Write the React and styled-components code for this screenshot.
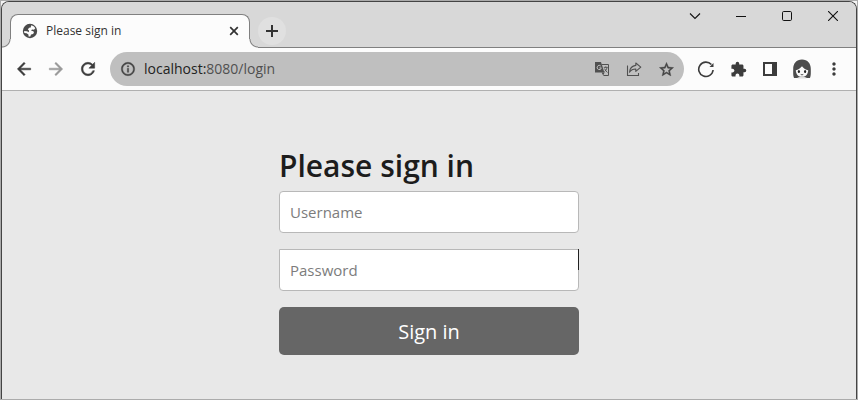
import React from 'react';
import styled, { createGlobalStyle } from 'styled-components';
import {
  MdArrowBack,
  MdArrowForward,
  MdExtension,
  MdInfoOutline,
  MdMoreVert,
  MdRefresh,
  MdStarBorder,
} from 'react-icons/md';

const App = () => {
  return (
    <>
      <GlobalStyle />
      <Frame>
        <BrowserWindow>
          <TabStrip />
          <Toolbar />
          <Login />
        </BrowserWindow>
      </Frame>
    </>
  );
};

const TabStrip = () => (
  <Strip>
    <Tab>
      <GlobeIcon />
      <TabTitle>Please sign in</TabTitle>
      <TabClose type="button" aria-label="Close tab">
        <svg width="10" height="10" viewBox="0 0 10 10">
          <path d="M1.2 1.2l7.6 7.6M8.8 1.2L1.2 8.8" stroke="currentColor" strokeWidth="1.7" />
        </svg>
      </TabClose>
    </Tab>
    <NewTab type="button" aria-label="New tab">
      <svg width="12" height="12" viewBox="0 0 12 12">
        <path d="M6 0v12M0 6h12" stroke="currentColor" strokeWidth="2" />
      </svg>
    </NewTab>
    <WindowControls>
      <WindowButton type="button" aria-label="Search tabs">
        <svg width="12" height="12" viewBox="0 0 12 12">
          <path d="M1 3.500l5 5 5-5" fill="none" stroke="currentColor" strokeWidth="1.1" />
        </svg>
      </WindowButton>
      <WindowButton type="button" aria-label="Minimize">
        <svg width="10" height="10" viewBox="0 0 10 10">
          <path d="M0 5.500h10" stroke="currentColor" />
        </svg>
      </WindowButton>
      <WindowButton type="button" aria-label="Maximize">
        <svg width="10" height="10" viewBox="0 0 10 10">
          <rect x="0.5" y="0.5" width="9" height="9" rx="1.2" fill="none" stroke="currentColor" />
        </svg>
      </WindowButton>
      <WindowButton type="button" aria-label="Close">
        <svg width="10" height="10" viewBox="0 0 10 10">
          <path d="M0 0l10 10M10 0L0 10" stroke="currentColor" strokeWidth="1.1" />
        </svg>
      </WindowButton>
    </WindowControls>
  </Strip>
);

const Toolbar = () => (
  <Bar>
    <IconGroup>
      <IconButton type="button" aria-label="Back" $bold><MdArrowBack size={20} /></IconButton>
      <IconButton type="button" aria-label="Forward" $color="#999" $bold><MdArrowForward size={20} /></IconButton>
      <IconButton type="button" aria-label="Reload" $bold><MdRefresh size={20} /></IconButton>
    </IconGroup>
    <AddressBar>
      <IconButton type="button" aria-label="Site information" $color="#444" $bold><MdInfoOutline size={16} /></IconButton>
      <Url>localhost:<span>8080/login</span></Url>
      <IconButton type="button" aria-label="Translate this page" $color="#505050"><TranslateIcon /></IconButton>
      <IconButton type="button" aria-label="Share this page" $color="#505050"><ShareIcon /></IconButton>
      <IconButton type="button" aria-label="Bookmark this tab" $color="#444" $bold><MdStarBorder size={17} /></IconButton>
    </AddressBar>
    <IconGroup>
      <IconButton type="button" aria-label="Sync">
        <svg width="18" height="18" viewBox="0 0 18 18">
          <path d="M16.100 10a7.200 7.200 0 1 1-1.700-5.400" fill="none" stroke="currentColor" strokeWidth="1.600" />
          <path d="M16.500 3v4h-4z" fill="currentColor" />
        </svg>
      </IconButton>
      <IconButton type="button" aria-label="Extensions"><MdExtension size={17} /></IconButton>
      <IconButton type="button" aria-label="Side panel">
        <svg width="14" height="14" viewBox="0 0 14 14">
          <path d="M0 0h14v14H0zM2 2v10h7V2z" fill="currentColor" fillRule="evenodd" />
        </svg>
      </IconButton>
      <IconButton type="button" aria-label="Profile"><Avatar /></IconButton>
      <IconButton type="button" aria-label="Menu"><MdMoreVert size={20} /></IconButton>
    </IconGroup>
  </Bar>
);

const GlobeIcon = () => (
  <svg width="18" height="18" viewBox="0 0 18 18">
    <circle cx="9" cy="9" r="7.200" fill="#4a4a4a" />
    <path d="M10.200 3.200c1.900.4 3.300 1.400 4.100 3l-1.300 1.600-2-.2-.9 1.100 2.300.5.600 1.800-1.600 1.200-1.400.4-.7 2-1.700-.2-.2-2-1.800-1.200-2.300-.2-.2-2 2.900.2 1.800 1 .2-1.700-1.200-1.100 1.300-1.600 1.600-.4z" fill="#fcfcfc" />
  </svg>
);

const TranslateIcon = () => (
  <svg width="14" height="14" viewBox="0 0 14 14" fill="none" stroke="currentColor">
    <path d="M6.500 2.500h7v11h-5" />
    <path d="M0 0h6l3.400 10.500H0z" fill="currentColor" stroke="none" />
    <path d="M6.600 10.500h2.900l-1.300 3z" fill="currentColor" stroke="none" />
    <path d="M5.800 4.100A2.100 2.100 0 1 0 6.300 5.900H4.400" stroke="#bfbfbf" />
    <path d="M8.800 5.400h4M10.800 4.400v1M12 5.600c-.4 1.900-1.400 3.200-2.600 4.200M9.600 6.600c.6 1.600 1.600 2.900 2.900 3.900" strokeWidth="0.9" />
  </svg>
);

const ShareIcon = () => (
  <svg width="16" height="16" viewBox="0 0 16 16" fill="none" stroke="currentColor" strokeWidth="1.1">
    <path d="M1.500 4.500v10h11v-2.500" />
    <path d="M9.800 2l5 4.200-5 4.200V8c-2.900 0-4.900 1-6.300 3.200.3-3.600 2.400-6.300 6.300-6.800z" strokeLinejoin="round" />
  </svg>
);

const Avatar = () => (
  <svg width="20" height="20" viewBox="0 0 20 20">
    <path d="M10 0.500c5.600 0 8.800 4 8.800 9.500 0 3.500.3 6.500-.8 9h-2.500l-5.500-1-5.500 1H2C.9 16.500 1.200 13.500 1.200 10 1.200 4.500 4.400.5 10 .5z" fill="#4c4c4c" />
    <path d="M3.800 11.200c2.200-.4 4.200-1.600 6.200-4 1.800 2.300 3.800 3.500 6.200 4-.2 4.300-2.600 6.600-6.200 6.600s-6-2.300-6.200-6.600z" fill="#f8f8f8" />
    <ellipse cx="6.900" cy="12.500" rx="1.100" ry="1.500" fill="#222" />
    <ellipse cx="13.100" cy="12.500" rx="1.100" ry="1.500" fill="#222" />
    <path d="M8.700 15.400q1.300 1 2.600 0" fill="none" stroke="#555" />
    <path d="M5.500 19.500c.5-1.200 2-1.700 4.500-1.700s4 .5 4.500 1.700z" fill="#ddd" />
  </svg>
);

const Login = () => (
  <Page>
    <Form onSubmit={(e) => e.preventDefault()}>
      <Heading>Please sign in</Heading>
      <Field>
        <Input name="username" type="text" placeholder="Username" aria-label="Username" />
      </Field>
      <Field $marked>
        <Input name="password" type="password" placeholder="Password" aria-label="Password" $squareTop />
      </Field>
      <Submit type="submit">Sign in</Submit>
    </Form>
  </Page>
);

const GlobalStyle = createGlobalStyle`
  * {
    box-sizing: border-box;
  }
  body {
    margin: 0;
    background: #f4f4f4;
    font-family: "Open Sans", "Noto Sans", sans-serif;
  }
  button, input {
    font-family: inherit;
  }
  svg {
    display: block;
    flex-shrink: 0;
  }
`;

const Frame = styled.div`
  display: flex;
  min-height: 100vh;
  border: 1px solid #ababab;
`;

const BrowserWindow = styled.div`
  flex: 1;
  min-width: 0;
  display: flex;
  flex-direction: column;
  border: 1px solid #444;
  border-bottom: none;
  border-radius: 8px 8px 0 0;
  background: #e8e8e8;
  overflow: hidden;
`;

const Strip = styled.header`
  display: flex;
  align-items: flex-end;
  height: 46px;
  padding-left: 8px;
  background: #d8d8d8;
  border-bottom: 1px solid #808080;
`;

const Tab = styled.div`
  position: relative;
  display: flex;
  align-items: center;
  gap: 7px;
  width: 240px;
  height: 34px;
  margin-bottom: -1px;
  padding: 0 9px 2px 10px;
  border: 1px solid #808080;
  border-bottom: none;
  border-radius: 8px 8px 0 0;
  background: #fcfcfc;
  color: #444;

  /* curved feet on both sides of the tab */
  &::before,
  &::after {
    content: '';
    position: absolute;
    bottom: 0;
    width: 9px;
    height: 9px;
  }
  &::before {
    left: -9px;
    background: radial-gradient(circle at 0 0, #d8d8d8 7px, #808080 8px, #fcfcfc 9px);
  }
  &::after {
    right: -9px;
    background: radial-gradient(circle at 100% 0, #d8d8d8 7px, #808080 8px, #fcfcfc 9px);
  }
`;

const TabTitle = styled.span`
  flex: 1;
  font-size: 12px;
  line-height: 18px;
  color: #333;
`;

const RoundButton = styled.button`
  display: flex;
  align-items: center;
  justify-content: center;
  padding: 0;
  border: none;
  border-radius: 50%;
  background: transparent;
  color: #333;
`;

const TabClose = styled(RoundButton)`
  width: 12px;
  height: 16px;
`;

const NewTab = styled(RoundButton)`
  width: 28px;
  height: 28px;
  margin: 0 0 2px 8px;
  background: #e0e0e0;
`;

const WindowControls = styled.div`
  display: flex;
  align-self: flex-start;
  margin-left: auto;
`;

const WindowButton = styled.button`
  display: flex;
  align-items: center;
  justify-content: center;
  width: 46px;
  height: 28px;
  padding: 0;
  border: none;
  background: transparent;
  color: #111;
`;

const Bar = styled.div`
  display: flex;
  align-items: center;
  gap: 6px;
  height: 43px;
  padding: 0 6px;
  background: #fcfcfc;
  border-bottom: 1px solid #b0b0b0;
`;

const IconGroup = styled.div`
  display: flex;
`;

const IconButton = styled(RoundButton)`
  width: 32px;
  height: 32px;
  color: ${({ $color }) => $color || '#3c3c3c'};

  path:not([fill='none']) {
    stroke-width: ${({ $bold }) => ($bold ? '0.6' : undefined)};
  }
`;

const AddressBar = styled.div`
  flex: 1;
  min-width: 0;
  display: flex;
  align-items: center;
  height: 34px;
  padding: 0 2px;
  border-radius: 17px;
  background: #bfbfbf;
`;

const Url = styled.div`
  flex: 1;
  min-width: 0;
  overflow: hidden;
  font-size: 14px;
  line-height: 20px;
  white-space: nowrap;
  color: #222;

  span {
    color: #505050;
  }
`;

const Page = styled.main`
  flex: 1;
  padding: 56px 16px 44px;
`;

const Form = styled.form`
  max-width: 300px;
  margin: 0 auto;
`;

const Heading = styled.h2`
  margin: 0 0 6px;
  font-size: 30px;
  font-weight: 600;
  line-height: 38px;
  color: #1c1c1c;
`;

const Field = styled.div`
  position: relative;
  margin-bottom: 16px;

  /* dark stroke on the upper half of the right edge */
  &::after {
    content: '';
    display: ${({ $marked }) => ($marked ? 'block' : 'none')};
    position: absolute;
    top: 0;
    right: 0;
    width: 1px;
    height: 50%;
    background: #222;
  }
`;

const Input = styled.input`
  display: block;
  width: 100%;
  height: 42px;
  padding: 0 10px;
  border: 1px solid #b8b8b8;
  border-radius: ${({ $squareTop }) => ($squareTop ? '0 0 4px 4px' : '4px')};
  background: #fff;
  color: #333;
  font-size: 15px;

  &::placeholder {
    color: #7c7c7c;
    opacity: 1;
  }
`;

const Submit = styled.button`
  width: 100%;
  height: 48px;
  border: none;
  border-radius: 5px;
  background: #666;
  color: #fff;
  font-size: 20px;
`;

export default App;
